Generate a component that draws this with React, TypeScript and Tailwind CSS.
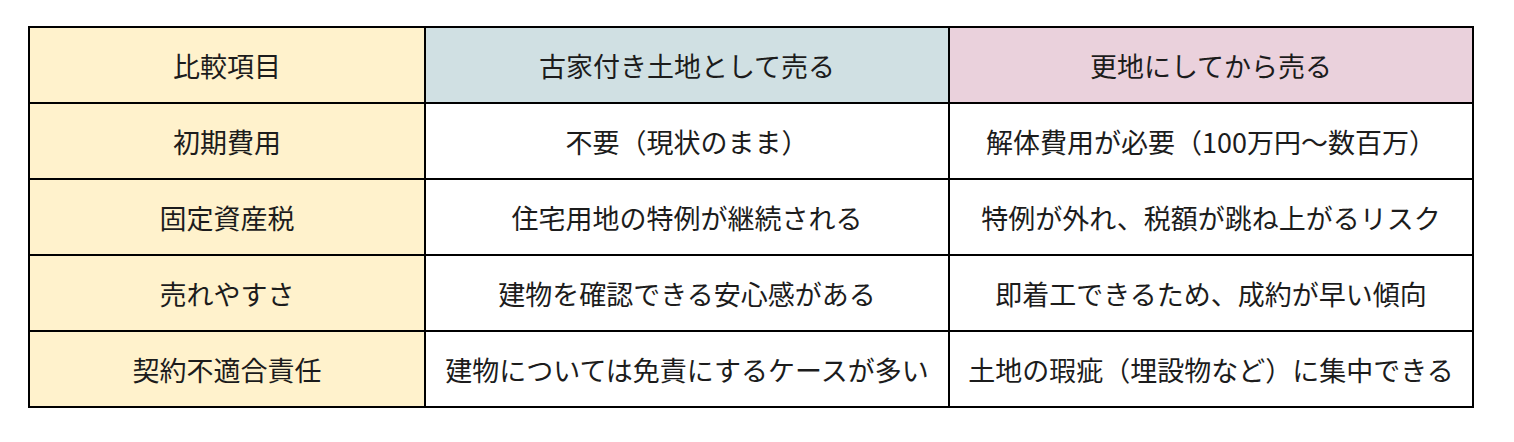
import React from 'react';

const rows: [string, string, string][] = [
  ['初期費用', '不要（現状のまま）', '解体費用が必要（100万円〜数百万）'],
  ['固定資産税', '住宅用地の特例が継続される', '特例が外れ、税額が跳ね上がるリスク'],
  ['売れやすさ', '建物を確認できる安心感がある', '即着工できるため、成約が早い傾向'],
  ['契約不適合責任', '建物については免責にするケースが多い', '土地の瑕疵（埋設物など）に集中できる'],
];

const cell = 'h-[74px] flex items-center justify-center text-center leading-none';

const App: React.FC = () => {
  return (
    <div
      className="min-h-screen bg-white pl-[28px] pt-[26px] text-[27px] text-[#1c1c1c]"
      style={{ fontFamily: '"Noto Sans CJK JP", "Noto Sans", sans-serif' }}
    >
      <div className="grid w-[1446px] grid-cols-[394px_522px_522px] gap-[2px] bg-black p-[2px]">
        <div className={`${cell} bg-[#fff2cc]`}>比較項目</div>
        <div className={`${cell} bg-[#d0e0e3]`}>古家付き土地として売る</div>
        <div className={`${cell} bg-[#ead1dc]`}>更地にしてから売る</div>
        {rows.map(([label, a, b]) => (
          <React.Fragment key={label}>
            <div className={`${cell} bg-[#fff2cc]`}>{label}</div>
            <div className={`${cell} bg-white`}>{a}</div>
            <div className={`${cell} bg-white`}>{b}</div>
          </React.Fragment>
        ))}
      </div>
    </div>
  );
};

export default App;
